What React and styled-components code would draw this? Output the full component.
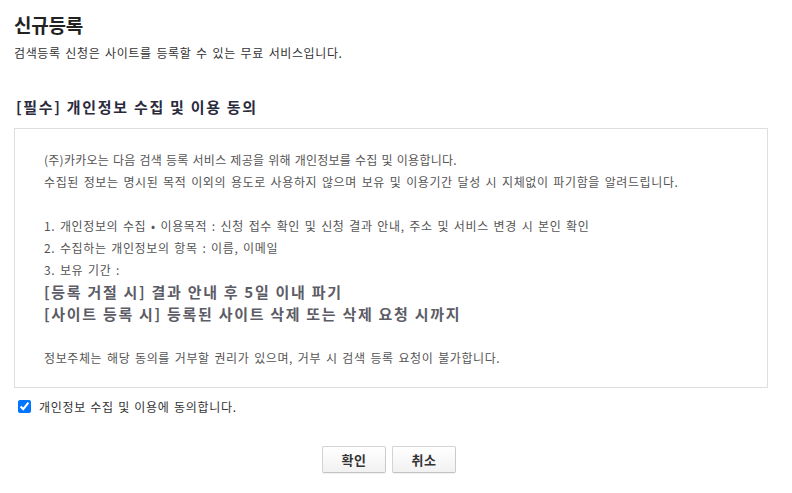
import React from "react";
import styled, { createGlobalStyle } from "styled-components";

const GlobalStyle = createGlobalStyle`
  html, body { margin: 0; padding: 0; background: #fff; }
  body { font-family: "Noto Sans CJK KR", "Noto Sans", sans-serif; color: #333; }
`;

const Page = styled.div`
  padding: 13px 24px 20px 14px;
  display: flex;
  flex-direction: column;
`;

const Title = styled.h1`
  margin: 0;
  font-size: 19px;
  line-height: 24px;
  font-weight: 700;
  color: #222;
  letter-spacing: -0.2px;
`;

const Subtitle = styled.p`
  margin: 7px 0 0;
  font-size: 12px;
  line-height: 18px;
  color: #333;
  letter-spacing: 0.6px;
  word-spacing: 1.5px;
`;

const SectionTitle = styled.h2`
  margin: 35px 0 0 2px;
  font-size: 15px;
  line-height: 20px;
  font-weight: 700;
  color: #2a2a3c;
  letter-spacing: 1.7px;
`;

const TermsBox = styled.div`
  margin-top: 11px;
  border: 1px solid #dedede;
  padding: 20px 29px 18px;
  display: flex;
  flex-direction: column;
`;

const Line = styled.div`
  font-size: ${(p) => (p.$strong ? "15px" : "12px")};
  font-weight: ${(p) => (p.$strong ? 700 : 400)};
  line-height: 22px;
  height: 22px;
  color: ${(p) => (p.$strong ? "#5c5c66" : "#555")};
  letter-spacing: ${(p) => (p.$strong ? "1.7px" : p.$tight ? "0.25px" : "0.6px")};
  word-spacing: ${(p) => (p.$strong ? "0" : p.$tight ? "1px" : "1.5px")};
  white-space: nowrap;
  margin-top: ${(p) => (p.$gap ? "22px" : "0")};
`;

const AgreeRow = styled.label`
  margin-top: 8px;
  display: flex;
  align-items: center;
  height: 20px;
  gap: 5px;
  font-size: 12px;
  color: #333;
  letter-spacing: 0.7px;
  word-spacing: 1px;
`;

const Checkbox = styled.input`
  margin: 3px 3px 3px 4px;
  width: 13px;
  height: 13px;
`;

const ButtonRow = styled.div`
  margin-top: 30px;
  display: flex;
  justify-content: center;
  gap: 6px;
  padding-right: 4px;
`;

const Button = styled.button`
  width: 64px;
  height: 27px;
  border: 1px solid #d3d3d3;
  border-bottom-color: #c4c4c4;
  border-right-color: #cacaca;
  border-radius: 2px;
  background: linear-gradient(#ffffff, #f1f1f1);
  box-shadow: 0 1px 1px rgba(0, 0, 0, 0.06);
  font-family: "Noto Sans CJK KR", "Noto Sans", sans-serif;
  font-size: 13px;
  font-weight: 700;
  color: #333;
  letter-spacing: 0.5px;
  padding: 0;
  cursor: pointer;
`;

export default function App() {
  return (
    <>
      <GlobalStyle />
      <Page>
        <Title>신규등록</Title>
        <Subtitle>검색등록 신청은 사이트를 등록할 수 있는 무료 서비스입니다.</Subtitle>
        <SectionTitle>[필수] 개인정보 수집 및 이용 동의</SectionTitle>
        <TermsBox>
          <Line $tight>(주)카카오는 다음 검색 등록 서비스 제공을 위해 개인정보를 수집 및 이용합니다.</Line>
          <Line>수집된 정보는 명시된 목적 이외의 용도로 사용하지 않으며 보유 및 이용기간 달성 시 지체없이 파기함을 알려드립니다.</Line>
          <Line $gap>1. 개인정보의 수집 • 이용목적 : 신청 접수 확인 및 신청 결과 안내, 주소 및 서비스 변경 시 본인 확인</Line>
          <Line>2. 수집하는 개인정보의 항목 : 이름, 이메일</Line>
          <Line>3. 보유 기간 :</Line>
          <Line $strong>[등록 거절 시] 결과 안내 후 5일 이내 파기</Line>
          <Line $strong>[사이트 등록 시] 등록된 사이트 삭제 또는 삭제 요청 시까지</Line>
          <Line $gap>정보주체는 해당 동의를 거부할 권리가 있으며, 거부 시 검색 등록 요청이 불가합니다.</Line>
        </TermsBox>
        <AgreeRow>
          <Checkbox type="checkbox" defaultChecked />
          개인정보 수집 및 이용에 동의합니다.
        </AgreeRow>
        <ButtonRow>
          <Button type="button">확인</Button>
          <Button type="button">취소</Button>
        </ButtonRow>
      </Page>
    </>
  );
}
